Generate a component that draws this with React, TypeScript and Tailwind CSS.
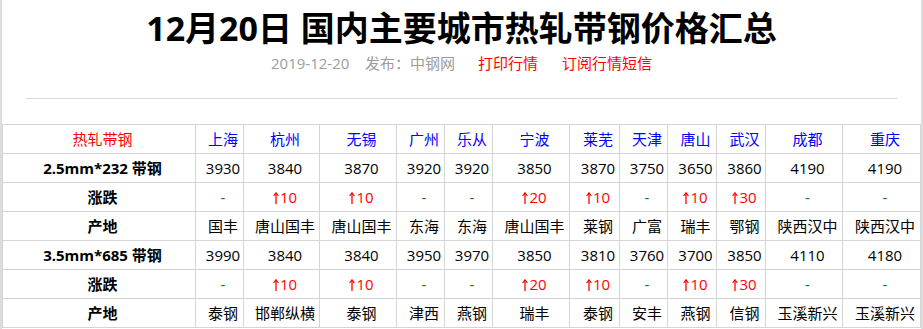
import React from "react";

const cities = ["上海", "杭州", "无锡", "广州", "乐从", "宁波", "莱芜", "天津", "唐山", "武汉", "成都", "重庆"];
const widths = ["w-[48px]", "w-[76px]", "w-[77px]", "w-[48px]", "w-[48px]", "w-[77px]", "w-[50px]", "w-[48px]", "w-[49px]", "w-[49px]", "w-[77px]", "w-[78px]"];

interface Spec {
  name: string;
  prices: string[];
  changes: string[];
  origins: string[];
}

const specs: Spec[] = [
  {
    name: "2.5mm*232 带钢",
    prices: ["3930", "3840", "3870", "3920", "3920", "3850", "3870", "3750", "3650", "3860", "4190", "4190"],
    changes: ["-", "10", "10", "-", "-", "20", "10", "-", "10", "30", "-", "-"],
    origins: ["国丰", "唐山国丰", "唐山国丰", "东海", "东海", "唐山国丰", "莱钢", "广富", "瑞丰", "鄂钢", "陕西汉中", "陕西汉中"],
  },
  {
    name: "3.5mm*685 带钢",
    prices: ["3990", "3840", "3840", "3950", "3970", "3850", "3810", "3760", "3700", "3850", "4110", "4180"],
    changes: ["-", "10", "10", "-", "-", "20", "10", "-", "10", "30", "-", "-"],
    origins: ["泰钢", "邯郸纵横", "泰钢", "津西", "燕钢", "瑞丰", "泰钢", "安丰", "燕钢", "信钢", "玉溪新兴", "玉溪新兴"],
  },
];

const cell = "h-[29px] border border-[#d4d4d4] pl-[7px] text-center whitespace-nowrap p-0";

// narrow up arrow like the one in the source font
function UpArrow() {
  return (
    <svg width="6" height="12" viewBox="0 0 6 12" className="inline-block align-[-1px] mr-px">
      <path d="M3 1.2V12" stroke="#ff0000" strokeWidth="1.3" fill="none" />
      <path d="M0.6 4L3 0.8L5.4 4" stroke="#ff0000" strokeWidth="1.2" fill="none" />
    </svg>
  );
}

function Change({ v }: { v: string }) {
  if (v === "-") return <span className="text-[#008000]">-</span>;
  return (
    <span className="text-[#ff0000]">
      <UpArrow />
      {v}
    </span>
  );
}

export default function App() {
  return (
    <div
      className="w-[923px] h-[329px] overflow-hidden bg-white border-x-2 border-[#dddddd] text-black"
      style={{ fontFamily: '"Open Sans", "Noto Sans CJK SC", sans-serif' }}
    >
      <h1 className="pt-[6px] text-center text-[34px] leading-[44px] font-bold">
        12月20日 国内主要城市热轧带钢价格汇总
      </h1>
      <div className="mt-[3px] text-center text-[15px] leading-[20px]">
        <span className="text-[#9c9c9c]">2019-12-20&nbsp;&nbsp;&nbsp; 发布：中钢网</span>
        <span className="ml-[23px] text-[#ff0000]">打印行情</span>
        <span className="ml-[24px] text-[#ff0000]">订阅行情短信</span>
      </div>
      <div className="mx-[24px] mt-[25px] h-px bg-[#d9d9d9]" />
      <table className="mt-[25px] w-[918px] table-fixed border-collapse text-[15px]">
        <colgroup>
          <col className="w-[193px]" />
          {widths.map((w, i) => (
            <col key={i} className={w} />
          ))}
        </colgroup>
        <tbody>
          <tr>
            <td className={`${cell} text-[#ff0000]`}>热轧带钢</td>
            {cities.map((c) => (
              <td key={c} className={`${cell} text-[#0000ff]`}>{c}</td>
            ))}
          </tr>
          {specs.map((s) => (
            <React.Fragment key={s.name}>
              <tr>
                <td className={`${cell} font-bold`}>{s.name}</td>
                {s.prices.map((p, i) => (
                  <td key={i} className={cell}>{p}</td>
                ))}
              </tr>
              <tr>
                <td className={`${cell} font-bold`}>涨跌</td>
                {s.changes.map((v, i) => (
                  <td key={i} className={cell}><Change v={v} /></td>
                ))}
              </tr>
              <tr>
                <td className={`${cell} font-bold`}>产地</td>
                {s.origins.map((o, i) => (
                  <td key={i} className={cell}>{o}</td>
                ))}
              </tr>
            </React.Fragment>
          ))}
        </tbody>
      </table>
    </div>
  );
}
